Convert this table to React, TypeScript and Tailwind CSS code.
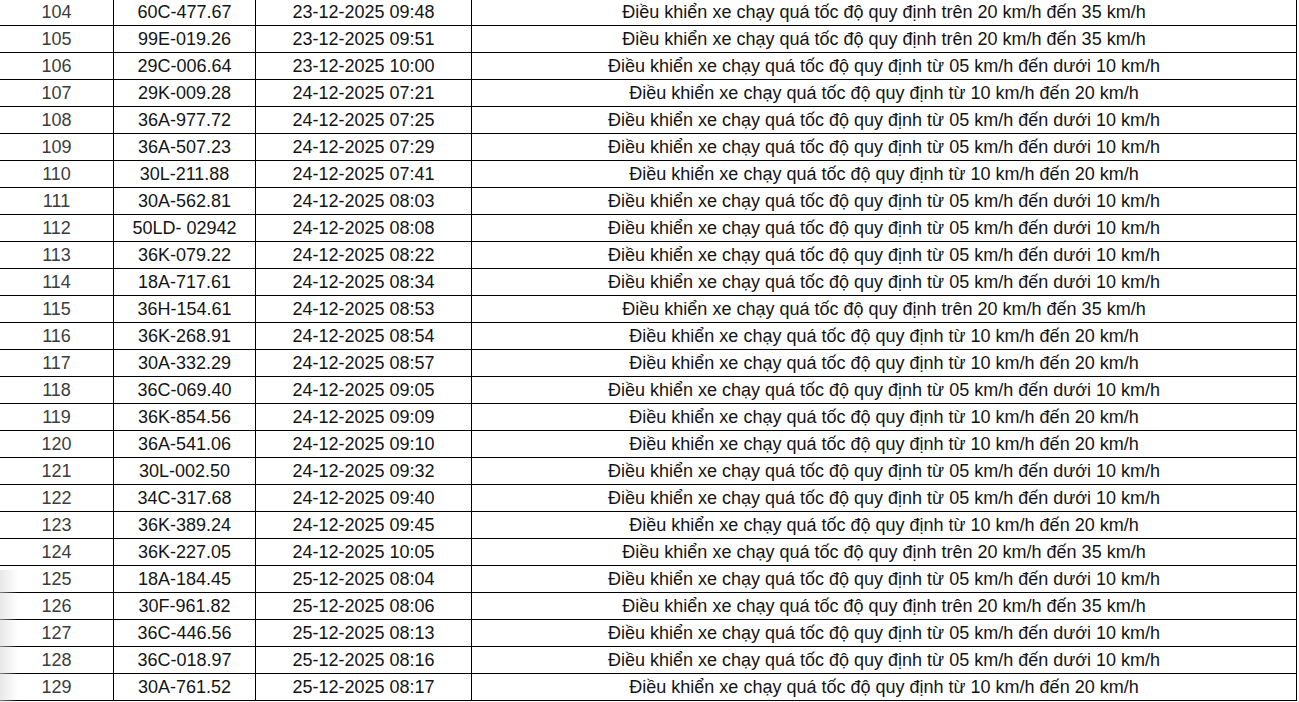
import React from "react";

type Violation = {
  stt: number;
  bienSo: string;
  thoiGian: string;
  loi: string;
};

const L05 = "Điều khiển xe chạy quá tốc độ quy định từ 05 km/h đến dưới 10 km/h";
const L10 = "Điều khiển xe chạy quá tốc độ quy định từ 10 km/h đến 20 km/h";
const L20 = "Điều khiển xe chạy quá tốc độ quy định trên 20 km/h đến 35 km/h";

const rows: Violation[] = [
  { stt: 104, bienSo: "60C-477.67", thoiGian: "23-12-2025 09:48", loi: L20 },
  { stt: 105, bienSo: "99E-019.26", thoiGian: "23-12-2025 09:51", loi: L20 },
  { stt: 106, bienSo: "29C-006.64", thoiGian: "23-12-2025 10:00", loi: L05 },
  { stt: 107, bienSo: "29K-009.28", thoiGian: "24-12-2025 07:21", loi: L10 },
  { stt: 108, bienSo: "36A-977.72", thoiGian: "24-12-2025 07:25", loi: L05 },
  { stt: 109, bienSo: "36A-507.23", thoiGian: "24-12-2025 07:29", loi: L05 },
  { stt: 110, bienSo: "30L-211.88", thoiGian: "24-12-2025 07:41", loi: L10 },
  { stt: 111, bienSo: "30A-562.81", thoiGian: "24-12-2025 08:03", loi: L05 },
  { stt: 112, bienSo: "50LD- 02942", thoiGian: "24-12-2025 08:08", loi: L05 },
  { stt: 113, bienSo: "36K-079.22", thoiGian: "24-12-2025 08:22", loi: L05 },
  { stt: 114, bienSo: "18A-717.61", thoiGian: "24-12-2025 08:34", loi: L05 },
  { stt: 115, bienSo: "36H-154.61", thoiGian: "24-12-2025 08:53", loi: L20 },
  { stt: 116, bienSo: "36K-268.91", thoiGian: "24-12-2025 08:54", loi: L10 },
  { stt: 117, bienSo: "30A-332.29", thoiGian: "24-12-2025 08:57", loi: L10 },
  { stt: 118, bienSo: "36C-069.40", thoiGian: "24-12-2025 09:05", loi: L05 },
  { stt: 119, bienSo: "36K-854.56", thoiGian: "24-12-2025 09:09", loi: L10 },
  { stt: 120, bienSo: "36A-541.06", thoiGian: "24-12-2025 09:10", loi: L10 },
  { stt: 121, bienSo: "30L-002.50", thoiGian: "24-12-2025 09:32", loi: L05 },
  { stt: 122, bienSo: "34C-317.68", thoiGian: "24-12-2025 09:40", loi: L05 },
  { stt: 123, bienSo: "36K-389.24", thoiGian: "24-12-2025 09:45", loi: L10 },
  { stt: 124, bienSo: "36K-227.05", thoiGian: "24-12-2025 10:05", loi: L20 },
  { stt: 125, bienSo: "18A-184.45", thoiGian: "25-12-2025 08:04", loi: L05 },
  { stt: 126, bienSo: "30F-961.82", thoiGian: "25-12-2025 08:06", loi: L20 },
  { stt: 127, bienSo: "36C-446.56", thoiGian: "25-12-2025 08:13", loi: L05 },
  { stt: 128, bienSo: "36C-018.97", thoiGian: "25-12-2025 08:16", loi: L05 },
  { stt: 129, bienSo: "30A-761.52", thoiGian: "25-12-2025 08:17", loi: L10 },
];

const App: React.FC = () => {
  return (
    <div className="relative w-[1299px] h-[702px] overflow-hidden bg-white">
      <div
        className="-mt-px flex flex-col text-[18px] leading-none text-[#141414]"
        style={{ fontFamily: '"Liberation Sans", Arial, sans-serif' }}
      >
        {rows.map((r) => (
          <div key={r.stt} className="flex h-[27px] w-[1297px] border-b border-black">
            <div className="flex w-[114px] items-center justify-center border-r border-black text-[#3c3c3c]">
              {r.stt}
            </div>
            <div className="flex w-[142px] items-center justify-center border-r border-black">
              {r.bienSo}
            </div>
            <div className="flex w-[216px] items-center justify-center border-r border-black">
              {r.thoiGian}
            </div>
            <div className="flex w-[825px] items-center justify-center border-r border-black">
              {r.loi}
            </div>
          </div>
        ))}
      </div>
      {/* bóng mờ góc trái dưới */}
      <div className="pointer-events-none absolute left-0 top-[570px] h-[132px] w-[18px] bg-gradient-to-r from-[#d8d8d8] to-transparent opacity-60" />
    </div>
  );
};

export default App;
